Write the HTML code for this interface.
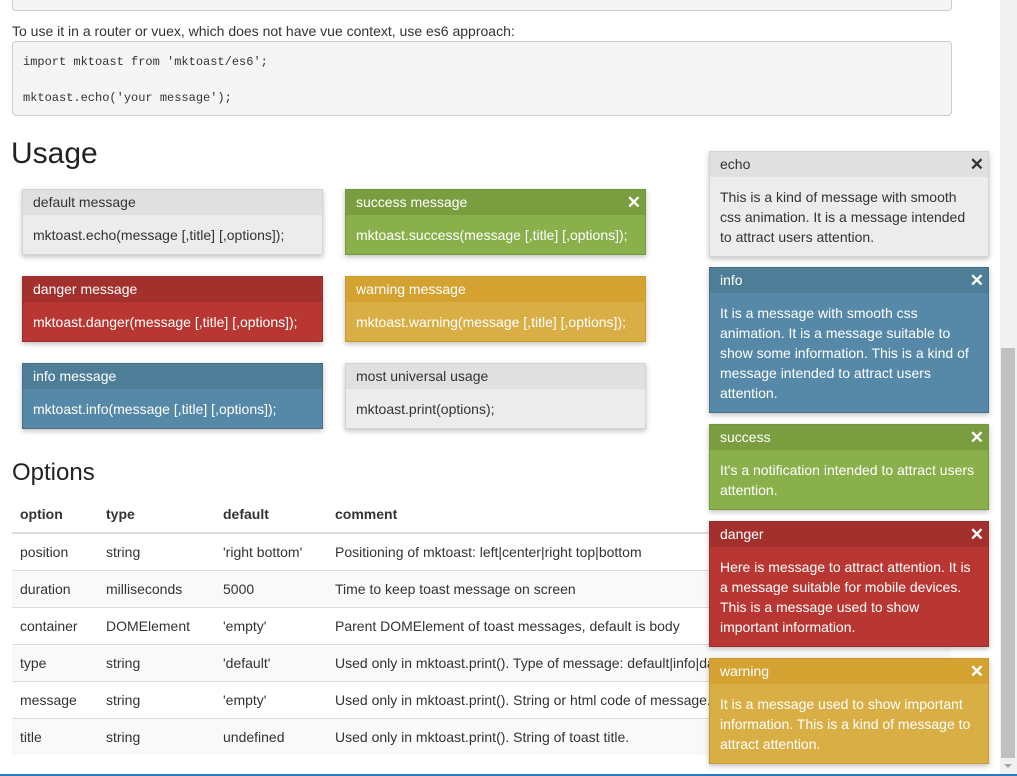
<!DOCTYPE html>
<html><head><meta charset="utf-8"><style>
*{box-sizing:border-box;margin:0;padding:0}
body{width:1017px;height:776px;overflow:hidden;position:relative;background:#fff;font-family:"Liberation Sans",Arial,sans-serif;font-size:14px;color:#333}
.abs{position:absolute}
.pre{background:#f5f5f5;border:1px solid #ccc;border-radius:4px;font-family:"Liberation Mono",monospace;font-size:12px;color:#333}
.t{position:absolute;box-shadow:0 2px 5px rgba(0,0,0,.25);border:1px solid}
.t .h{height:25px;line-height:25px;padding:0 10px;position:relative}
.t .b{padding:0 10px}
.x{position:absolute;right:4px;top:0;font-weight:bold;font-size:17px}
.def{border-color:#d4d4d4;color:#333}.def .h{background:#e0e0e0}.def .b{background:#ececec}
.suc{border-color:#74963c;color:#fff}.suc .h{background:#7a9d40}.suc .b{background:#89b04b}
.dan{border-color:#9c2d2a;color:#fff}.dan .h{background:#a4302d}.dan .b{background:#b93733}
.war{border-color:#c99a2c;color:#fff}.war .h{background:#d4a231}.war .b{background:#d9ae45}
.inf{border-color:#466f86;color:#fff}.inf .h{background:#4e7e97}.inf .b{background:#5689a8}
.dm .b{height:39px;line-height:40px}
.side .b{padding:10px 10px 9px;line-height:20px}
table{position:absolute;left:12px;top:496px;width:939px;border-collapse:collapse}
th{text-align:left;font-weight:bold;height:37px;padding:0 8px;border-bottom:2px solid #ddd}
td{height:37px;padding:0 8px;border-top:1px solid #ddd;white-space:nowrap}
tr:nth-child(odd) td{background:#f9f9f9}
</style></head><body>
<div class="abs pre" style="left:12px;top:-10px;width:940px;height:21px"></div>
<div class="abs" style="left:12px;top:23px">To use it in a router or vuex, which does not have vue context, use es6 approach:</div>
<div class="abs pre" style="left:12px;top:41px;width:940px;height:75px;padding:11px 10px;line-height:18px">import mktoast from 'mktoast/es6';<br><br>mktoast.echo('your message');</div>
<div class="abs" style="left:11px;top:137px;font-size:30px;color:#222">Usage</div>

<div class="t def dm" style="left:22px;top:189px;width:301px"><div class="h">default message</div><div class="b">mktoast.echo(message [,title] [,options]);</div></div>
<div class="t suc dm" style="left:345px;top:189px;width:301px"><div class="h">success message<span class="x">✕</span></div><div class="b">mktoast.success(message [,title] [,options]);</div></div>
<div class="t dan dm" style="left:22px;top:276px;width:301px"><div class="h">danger message</div><div class="b">mktoast.danger(message [,title] [,options]);</div></div>
<div class="t war dm" style="left:345px;top:276px;width:301px"><div class="h">warning message</div><div class="b">mktoast.warning(message [,title] [,options]);</div></div>
<div class="t inf dm" style="left:22px;top:363px;width:301px"><div class="h">info message</div><div class="b">mktoast.info(message [,title] [,options]);</div></div>
<div class="t def dm" style="left:345px;top:363px;width:301px"><div class="h">most universal usage</div><div class="b">mktoast.print(options);</div></div>

<div class="abs" style="left:12px;top:459px;font-size:24px;color:#222">Options</div>
<table>
<tr><th style="width:86px">option</th><th style="width:117px">type</th><th style="width:112px">default</th><th>comment</th></tr>
<tr><td>position</td><td>string</td><td>'right bottom'</td><td>Positioning of mktoast: left|center|right top|bottom</td></tr>
<tr><td>duration</td><td>milliseconds</td><td>5000</td><td>Time to keep toast message on screen</td></tr>
<tr><td>container</td><td>DOMElement</td><td>'empty'</td><td>Parent DOMElement of toast messages, default is body</td></tr>
<tr><td>type</td><td>string</td><td>'default'</td><td>Used only in mktoast.print(). Type of message: default|info|danger</td></tr>
<tr><td>message</td><td>string</td><td>'empty'</td><td>Used only in mktoast.print(). String or html code of message.</td></tr>
<tr><td>title</td><td>string</td><td>undefined</td><td>Used only in mktoast.print(). String of toast title.</td></tr>
</table>

<div class="side">
<div class="t def" style="left:709px;top:151px;width:280px"><div class="h">echo<span class="x">✕</span></div><div class="b">This is a kind of message with smooth css animation. It is a message intended to attract users attention.</div></div>
<div class="t inf" style="left:709px;top:267px;width:280px"><div class="h">info<span class="x">✕</span></div><div class="b">It is a message with smooth css animation. It is a message suitable to show some information. This is a kind of message intended to attract users attention.</div></div>
<div class="t suc" style="left:709px;top:424px;width:280px"><div class="h">success<span class="x">✕</span></div><div class="b">It's a notification intended to attract users attention.</div></div>
<div class="t dan" style="left:709px;top:521px;width:280px"><div class="h">danger<span class="x">✕</span></div><div class="b">Here is message to attract attention. It is a message suitable for mobile devices. This is a message used to show important information.</div></div>
<div class="t war" style="left:709px;top:658px;width:280px"><div class="h">warning<span class="x">✕</span></div><div class="b">It is a message used to show important information. This is a kind of message to attract attention.</div></div>
</div>

<div class="abs" style="left:1000px;top:0;width:17px;height:776px;background:#f1f1f1"></div>
<div class="abs" style="left:1001px;top:348px;width:14px;height:410px;background:#c1c1c1"></div>
<div class="abs" style="left:1004px;top:764px;width:0;height:0;border-left:4px solid transparent;border-right:4px solid transparent;border-top:4px solid #a3a3a3"></div>
<div class="abs" style="left:0;top:774px;width:1017px;height:2px;background:#2a7ab8"></div>
</body></html>
